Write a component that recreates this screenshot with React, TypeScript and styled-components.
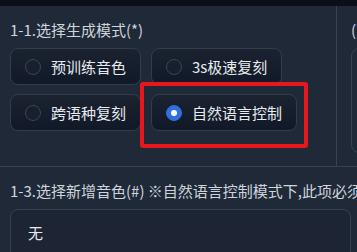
import React from "react";
import styled, { createGlobalStyle } from "styled-components";

const GlobalStyle = createGlobalStyle`
  body {
    margin: 0;
    background: #0b0f19;
    font-family: "Noto Sans CJK SC", "Noto Sans", sans-serif;
    overflow: hidden;
  }
`;

const Page = styled.div`
  padding-top: 6px;
  width: 357px;
  height: 252px;
  box-sizing: border-box;
  overflow: hidden;
`;

const Grid = styled.div`
  display: grid;
  grid-template-columns: 336px 1fr;
  grid-template-rows: 160px 1fr;
  gap: 1px;
  background: #374151;
  height: 100%;
`;

const Block = styled.div<{ $wide?: boolean; $padLeft?: number }>`
  position: relative;
  background: #1f2937;
  padding: 13px 10px 10px ${(p) => p.$padLeft ?? 10}px;
  grid-column: ${(p) => (p.$wide ? "1 / -1" : "auto")};
  overflow: hidden;
`;

const Label = styled.div`
  font-size: 15px;
  line-height: 22px;
  color: #cfd5de;
  white-space: nowrap;
  margin-bottom: 7px;
`;

const RadioGroup = styled.div`
  display: flex;
  flex-wrap: wrap;
  gap: 9px 10px;
  width: 300px;
`;

const RadioItem = styled.label`
  display: flex;
  align-items: center;
  gap: 10px;
  height: 37px;
  padding: 0 14px;
  box-sizing: border-box;
  border: 1px solid #323c4b;
  border-radius: 8px;
  background: linear-gradient(to top, #111827, #1b2230);
  color: #e8ebf0;
  font-size: 15px;
  white-space: nowrap;
`;

const Dot = styled.span<{ $on: boolean }>`
  width: 16px;
  height: 16px;
  border-radius: 50%;
  box-sizing: border-box;
  border: 1px solid ${(p) => (p.$on ? "#2f6fdf" : "#3a4555")};
  background: ${(p) => (p.$on ? "#2f6fdf" : "#18202d")};
  display: flex;
  align-items: center;
  justify-content: center;
  &::after {
    content: "";
    width: 6px;
    height: 6px;
    border-radius: 50%;
    background: #ffffff;
    display: ${(p) => (p.$on ? "block" : "none")};
  }
`;

const Highlight = styled.div`
  position: absolute;
  left: 140px;
  top: 76px;
  width: 168px;
  height: 66px;
  box-sizing: border-box;
  border: 4px solid #e8161d;
  border-radius: 3px;
  pointer-events: none;
`;

const SideBox = styled.div`
  height: 103px;
  border: 1px solid #374151;
  border-radius: 8px;
  width: 60px;
`;

const TextBox = styled.div`
  height: 50px;
  border: 1px solid #374151;
  border-radius: 8px;
  background: #1d2534;
  color: #e8ebf0;
  font-size: 15px;
  padding: 12px 17px;
  box-sizing: border-box;
`;

const modes = ["预训练音色", "3s极速复刻", "跨语种复刻", "自然语言控制"];

export default function App() {
  const selected = "自然语言控制";
  return (
    <>
      <GlobalStyle />
      <Page>
        <Grid>
          <Block>
            <Label>1-1.选择生成模式(*)</Label>
            <RadioGroup>
              {modes.map((m) => (
                <RadioItem key={m}>
                  <Dot $on={m === selected} />
                  {m}
                </RadioItem>
              ))}
            </RadioGroup>
            <Highlight />
          </Block>
          <Block $padLeft={14}>
            <Label>(可选)</Label>
            <SideBox />
          </Block>
          <Block $wide>
            <Label>1-3.选择新增音色(#) ※自然语言控制模式下,此项必须选择</Label>
            <TextBox>无</TextBox>
          </Block>
        </Grid>
      </Page>
    </>
  );
}
